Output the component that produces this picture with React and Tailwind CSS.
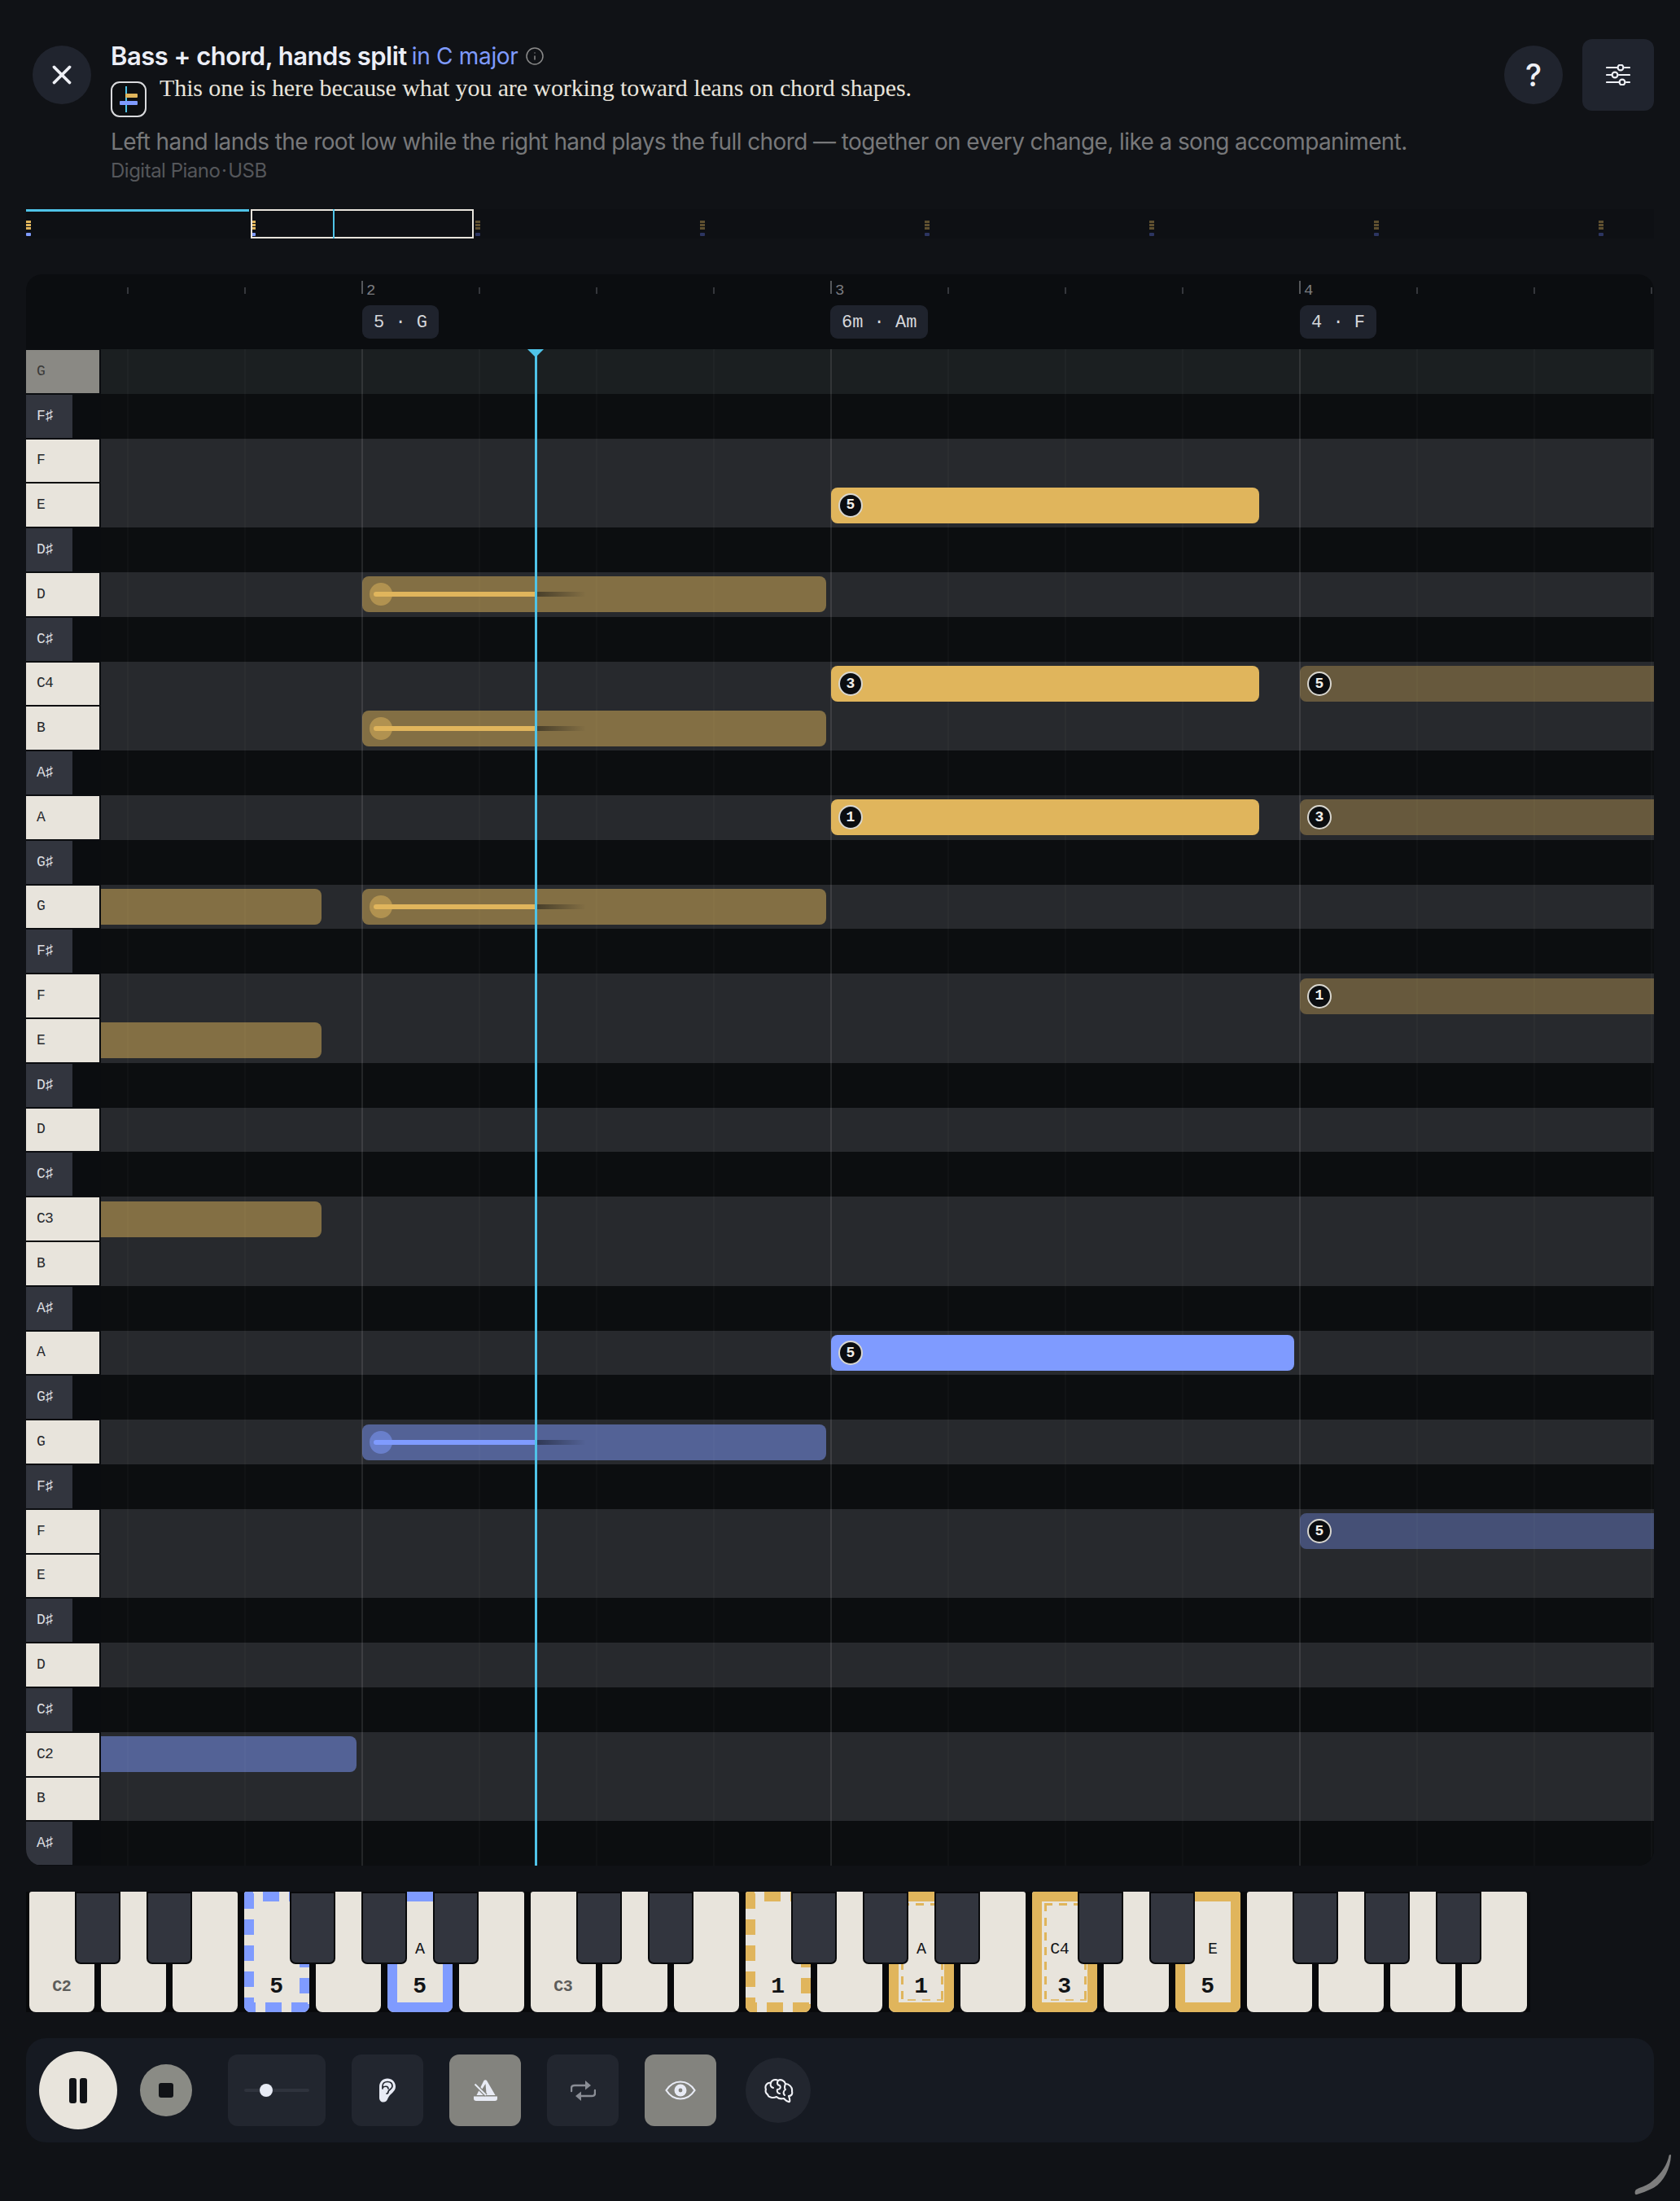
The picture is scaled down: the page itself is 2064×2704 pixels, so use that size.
import React from "react";
import { X, Info } from "lucide-react";

const ROW_H = 54.8;
const MONO = "font-['Liberation_Mono',monospace]";

const ROWS = [
  ["G", 0], ["F♯", 1], ["F", 0], ["E", 0], ["D♯", 1], ["D", 0], ["C♯", 1], ["C4", 0], ["B", 0], ["A♯", 1],
  ["A", 0], ["G♯", 1], ["G", 0], ["F♯", 1], ["F", 0], ["E", 0], ["D♯", 1], ["D", 0], ["C♯", 1], ["C3", 0],
  ["B", 0], ["A♯", 1], ["A", 0], ["G♯", 1], ["G", 0], ["F♯", 1], ["F", 0], ["E", 0], ["D♯", 1], ["D", 0],
  ["C♯", 1], ["C2", 0], ["B", 0], ["A♯", 1],
];

const YELLOW = "bg-[#e0b55c]";
const YELLOW_DIM = "bg-[#e0b55c]/50";
const YELLOW_LATER = "bg-[#e0b55c]/35";
const BLUE = "bg-[#7f9bff]";
const BLUE_DIM = "bg-[#7f9bff]/50";
const BLUE_LATER = "bg-[#7f9bff]/35";

// row, x from, x to (page pixels), colour, finger, progress colour
const NOTES = [
  { row: 3, from: 1021, to: 1547, color: YELLOW, finger: 5 },
  { row: 5, from: 445, to: 1015, color: YELLOW_DIM, hand: "y" },
  { row: 7, from: 1021, to: 1547, color: YELLOW, finger: 3 },
  { row: 7, from: 1597, to: 2040, color: YELLOW_LATER, finger: 5 },
  { row: 8, from: 445, to: 1015, color: YELLOW_DIM, hand: "y" },
  { row: 10, from: 1021, to: 1547, color: YELLOW, finger: 1 },
  { row: 10, from: 1597, to: 2040, color: YELLOW_LATER, finger: 3 },
  { row: 12, from: 124, to: 395, color: YELLOW_DIM, square: true },
  { row: 12, from: 445, to: 1015, color: YELLOW_DIM, hand: "y" },
  { row: 14, from: 1597, to: 2040, color: YELLOW_LATER, finger: 1 },
  { row: 15, from: 124, to: 395, color: YELLOW_DIM, square: true },
  { row: 19, from: 124, to: 395, color: YELLOW_DIM, square: true },
  { row: 22, from: 1021, to: 1590, color: BLUE, finger: 5 },
  { row: 24, from: 445, to: 1015, color: BLUE_DIM, hand: "b" },
  { row: 26, from: 1597, to: 2040, color: BLUE_LATER, finger: 5 },
  { row: 31, from: 124, to: 438, color: BLUE_DIM, square: true },
];

const BEATS = [156, 300, 444, 588, 732, 876, 1020, 1164, 1308, 1452, 1596, 1740, 1884, 2028];
const BARS = { 444: "2", 1020: "3", 1596: "4" };
const CHIPS = [
  [445, "5 · G"],
  [1020, "6m · Am"],
  [1597, "4 · F"],
];

const BLACK_AT = [1, 2, 4, 5, 6, 8, 9, 11, 12, 13, 15, 16, 18, 19, 20];

const KEY_MARKS = {
  3: { dashed: "blue", finger: 5 },
  5: { solid: "border-[#7f9bff]", finger: 5, name: "A" },
  10: { dashed: "yellow", finger: 1 },
  12: { solid: "border-[#e0b55c]", finger: 1, name: "A", inner: true },
  14: { solid: "border-[#e0b55c]", finger: 3, name: "C4", inner: true, nameShift: "-translate-x-[6px]" },
  16: { solid: "border-[#e0b55c]", finger: 5, name: "E", nameShift: "translate-x-[6px]" },
};

function Header() {
  return (
    <header className="h-[257px] flex items-start pt-[48px]">
      <button className="ml-2 mt-2 w-[72px] h-[72px] rounded-full bg-[#20242e] flex items-center justify-center text-[#eef0f6] shrink-0">
        <X size={38} strokeWidth={2.4} />
      </button>
      <div className="ml-[24px] mt-[2px] flex-1 font-['Inter',sans-serif]">
        <div className="h-[38px] flex items-center">
          <span className="text-[31px] font-semibold text-[#eceef6] tracking-[-0.5px]">Bass + chord, hands split</span>
          <span className="ml-[6px] text-[28px] text-[#7f9bff] tracking-[-0.3px]">in C major</span>
          <Info size={24} strokeWidth={1.5} className="ml-[8px] text-[#8a8a8a]" />
        </div>
        <div className="mt-3 h-[44px] flex items-start">
          <div className="relative w-[44px] h-[44px] rounded-[11px] border-2 border-[#d9dadd] bg-[#0d0f12] shrink-0">
            <div className="absolute left-[16px] top-[4px] w-[1.5px] h-[32px] bg-[#4fc3e8]" />
            <div className="absolute left-[16px] top-[13px] w-[15px] h-[5px] rounded-[1px] bg-[#e0b55c]" />
            <div className="absolute left-[9px] top-[22px] w-[22px] h-[5px] rounded-[1px] bg-[#7f9bff]" />
          </div>
          <p className="ml-[16px] font-['Liberation_Serif',serif] text-[30px] leading-4 text-[#e8e4dc] tracking-[-0.1px]">
            This one is here because what you are working toward leans on chord shapes.
          </p>
        </div>
        <p className="mt-3 text-[28px] leading-9 text-[#77787a] tracking-[-0.6px]">
          Left hand lands the root low while the right hand plays the full chord — together on every change, like a song accompaniment.
        </p>
        <p className="text-[24px] leading-9 text-[#55575b] tracking-[-0.5px]">Digital Piano{"\u200a·\u200a"}USB</p>
      </div>
      <button className="mt-2 w-[72px] h-[72px] rounded-full bg-[#20242e] flex items-center justify-center text-[#eef0f6] text-[38px] font-medium font-['Inter',sans-serif] shrink-0">
        ?
      </button>
      <button className="ml-6 w-[88px] h-[88px] rounded-[12px] bg-[#20242e] flex items-center justify-center shrink-0">
        <svg width="30" height="26" viewBox="0 0 30 26" fill="none" stroke="#eef0f6" strokeWidth="2.2" strokeLinecap="round">
          <path d="M1 4h13M23 4h6M1 13h6M16 13h13M1 22h15M25 22h4" />
          <circle cx="18" cy="4" r="3.4" />
          <circle cx="11" cy="13" r="3.4" />
          <circle cx="20" cy="22" r="3.4" />
        </svg>
      </button>
    </header>
  );
}

function MiniMap() {
  return (
    <div className="relative h-[36px] bg-[#0e1014]">
      {[0, 1, 2, 3, 4, 5, 6, 7].map((i) => (
        <div key={i} className="absolute top-[14px] w-[6px] flex flex-col gap-[1px]" style={{ left: 276 * i }}>
          <div className={"h-[3px] " + (i < 2 ? "bg-[#e0b55c]" : "bg-[#5f5030]")} />
          <div className={"h-[3px] " + (i < 2 ? "bg-[#e0b55c]" : "bg-[#5f5030]")} />
          <div className={"h-[3px] " + (i < 2 ? "bg-[#e0b55c]" : "bg-[#5f5030]")} />
          <div className={"mt-[3px] h-[4px] rounded-[1px] " + (i < 2 ? "bg-[#7f9bff]" : "bg-[#2c3561]")} />
        </div>
      ))}
      <div className="absolute left-0 top-0 w-[274px] h-[3px] bg-[#4fc3e8]" />
      <div className="absolute left-[276px] top-0 w-[274px] h-[36px] border-2 border-[#e8e4dc]" />
      <div className="absolute left-[377px] top-0 w-[2px] h-[36px] bg-[#4fc3e8]" />
    </div>
  );
}

function Ruler() {
  return (
    <div className="relative h-[92px]">
      {BEATS.map((x) => (
        <div
          key={x}
          className={BARS[x] ? "absolute top-[8px] w-[2px] h-[16px] bg-[#55575b]" : "absolute top-[16px] w-[2px] h-[8px] bg-[#35373c]"}
          style={{ left: x - 32 }}
        />
      ))}
      {BEATS.filter((x) => BARS[x]).map((x) => (
        <span key={x} className={"absolute top-[9px] text-[19px] leading-[22px] text-[#7b7c80] " + MONO} style={{ left: x - 26 }}>
          {BARS[x]}
        </span>
      ))}
      {CHIPS.map(([x, label]) => (
        <div
          key={x}
          className={"absolute top-[38px] h-[41px] pt-[1px] px-[14px] rounded-[9px] bg-[#1f232d] flex items-center text-[22px] text-[#d5d6da] whitespace-pre " + MONO}
          style={{ left: x - 32 }}
        >
          {label}
        </div>
      ))}
    </div>
  );
}

function Note({ note }) {
  return (
    <div
      className={"absolute h-[44px] " + note.color + (note.square ? " rounded-r-lg" : " rounded-lg")}
      style={{ left: note.from - 32, width: note.to - note.from, top: note.row * ROW_H + 5.4 }}
    >
      {note.finger && (
        <div className={"absolute left-[9px] top-[7px] w-[30px] h-[30px] rounded-full bg-[#0b0d10] border-2 border-[#d8d6cf] flex items-center justify-center text-[18px] font-bold text-[#f1efe9] " + MONO}>
          {note.finger}
        </div>
      )}
      {note.hand && (
        <>
          <div className={"absolute left-[9px] top-[8px] w-[28px] h-[28px] rounded-full " + (note.hand === "y" ? "bg-[#e0b55c]/50" : "bg-[#7f9bff]/50")} />
          <div className={"absolute left-[14px] top-[19px] w-[199px] h-[6px] rounded-l-full " + (note.hand === "y" ? "bg-[#e0b55c]" : "bg-[#7f9bff]")} />
          <div className="absolute left-[213px] top-[19px] w-[62px] h-[6px] bg-gradient-to-r from-[#0b0d10]/50 to-transparent" />
        </>
      )}
    </div>
  );
}

function Roll() {
  return (
    <div className="relative">
      {ROWS.map(([name, black], i) => (
        <div key={i} className="flex h-[54.8px]">
          <div className="w-[92px] shrink-0 py-[1px]">
            <div
              className={
                "h-full pl-[13px] flex items-center text-[18px] tracking-[-0.8px] " + MONO + " " +
                (black
                  ? "w-[57px] bg-[#32353e] text-[#dcdde0]"
                  : i === 0
                    ? "w-[90px] bg-[#8a8984] text-[#3a3a38]"
                    : "w-[90px] bg-[#e8e4dc] text-[#26282c]")
              }
            >
              {name}
            </div>
          </div>
          <div className={"flex-1 " + (i === 0 ? "bg-[#1b1f21]" : black ? "bg-[#0c0e10]" : "bg-[#27292d]")} />
        </div>
      ))}
      {BEATS.map((x) => (
        <div
          key={x}
          className={"absolute top-0 bottom-0 " + (BARS[x] ? "w-[2px] bg-white/[0.1]" : "w-[1.5px] bg-white/[0.025]")}
          style={{ left: x - 32 }}
        />
      ))}
      {NOTES.map((n, i) => (
        <Note key={i} note={n} />
      ))}
      <div className="absolute left-[625px] top-0 bottom-0 w-[3px] bg-[#4fc3e8]" />
      <div className="absolute left-[616px] top-0 w-0 h-0 border-l-[10px] border-r-[10px] border-t-[10px] border-l-transparent border-r-transparent border-t-[#4fc3e8]" />
    </div>
  );
}

// dashes drawn edge by edge: 20px on, 12px off, with the phase each edge has in the picture
function DashedBlue() {
  return (
    <>
      <div className="absolute left-0 right-0 top-0 h-[12px] bg-[repeating-linear-gradient(90deg,#7f9bff_0_11px,transparent_11px_23px,#7f9bff_23px_32px)]" />
      <div className="absolute left-0 right-0 bottom-0 h-[12px] bg-[repeating-linear-gradient(90deg,#7f9bff_0_14px,transparent_14px_26.5px,#7f9bff_26.5px_32px)]" />
      <div className="absolute left-0 top-0 bottom-0 w-[12px] bg-[repeating-linear-gradient(180deg,transparent_0_2px,#7f9bff_2px_21px,transparent_21px_32px)]" />
      <div className="absolute right-0 top-0 bottom-0 w-[12px] bg-[repeating-linear-gradient(180deg,transparent_0_10px,#7f9bff_10px_29px,transparent_29px_32px)]" />
    </>
  );
}

function DashedYellow() {
  return (
    <>
      <div className="absolute left-0 right-0 top-0 h-[12px] bg-[repeating-linear-gradient(90deg,#e0b55c_0_11px,transparent_11px_23px,#e0b55c_23px_32px)]" />
      <div className="absolute left-0 right-0 bottom-0 h-[12px] bg-[repeating-linear-gradient(90deg,#e0b55c_0_14px,transparent_14px_26.5px,#e0b55c_26.5px_32px)]" />
      <div className="absolute left-0 top-0 bottom-0 w-[12px] bg-[repeating-linear-gradient(180deg,transparent_0_2px,#e0b55c_2px_21px,transparent_21px_32px)]" />
      <div className="absolute right-0 top-0 bottom-0 w-[12px] bg-[repeating-linear-gradient(180deg,transparent_0_10px,#e0b55c_10px_29px,transparent_29px_32px)]" />
    </>
  );
}

function InnerDashes() {
  return (
    <>
      <div className="absolute left-[15px] right-[13px] top-[14px] h-[3px] bg-[repeating-linear-gradient(90deg,#e0b55c_0_10px,transparent_10px_18px)]" />
      <div className="absolute left-[15px] right-[13px] bottom-[14px] h-[2px] bg-[repeating-linear-gradient(90deg,transparent_0_8px,#e0b55c_8px_18px)] opacity-80" />
      <div className="absolute left-[15px] top-[14px] bottom-[14px] w-[3px] bg-[repeating-linear-gradient(180deg,#e0b55c_0_10px,transparent_10px_18px)]" />
      <div className="absolute right-[13px] top-[14px] bottom-[14px] w-[3px] bg-[repeating-linear-gradient(180deg,#e0b55c_0_10px,transparent_10px_18px)]" />
    </>
  );
}

function Keyboard() {
  const keys = Array.from({ length: 21 }, (_, i) => i);
  return (
    <div className="relative mt-8 w-[1848px] h-[148px] pl-1 flex gap-[8.5px] bg-[#08090b]">
      {keys.map((i) => {
        const mark = KEY_MARKS[i];
        return (
          <div key={i} className="relative w-[79.5px] shrink-0 bg-[#e8e4dc] rounded-t-[3px] rounded-b-lg overflow-hidden">
            {mark && mark.solid && <div className={"absolute inset-0 border-[12px] " + mark.solid} />}
            {mark && mark.dashed === "blue" && <DashedBlue />}
            {mark && mark.dashed === "yellow" && <DashedYellow />}
            {mark && mark.inner && <InnerDashes />}
            {mark && (
              <span className={"absolute left-0 right-0 top-[117px] -translate-y-1/2 text-center text-[28px] font-bold text-[#111316] " + MONO}>
                {mark.finger}
              </span>
            )}
            {mark && mark.name && (
              <span className={"absolute left-0 right-0 top-[71px] -translate-y-1/2 text-center text-[20px] tracking-[-0.6px] text-[#111316] " + MONO + " " + (mark.nameShift || "")}>
                {mark.name}
              </span>
            )}
            {(i === 0 || i === 7) && (
              <span className={"absolute left-0 right-0 top-[117px] -translate-y-1/2 text-center text-[20px] tracking-[-0.6px] font-bold text-[#5c5c5a] " + MONO}>
                {i === 0 ? "C2" : "C3"}
              </span>
            )}
          </div>
        );
      })}
      {BLACK_AT.map((k) => (
        <div
          key={k}
          className="absolute top-0 w-[56px] h-[89px] bg-[#32353e] border-2 border-[#08090b] rounded-b-[7px]"
          style={{ left: 4 + 88 * k - 4.25 - 28 }}
        />
      ))}
    </div>
  );
}

function EarIcon() {
  return (
    <svg width="22" height="30" viewBox="0 0 22 30">
      <path d="M1 10.5C1 4.5 5.5 0.5 11 0.5S21 4.5 21 10.5C21 17 14 19 11.5 25C10.5 28 8.5 29.5 6 29.5C3 29.5 1 27.5 1 24Z" fill="#e8ebf5" />
      <path d="M5 13V10C5 6.5 7.5 4.5 11 4.5S17 6.5 17 10C17 13.5 13 13.5 12 16.5C12 18 11 19 10 19M5 12C7 9.5 12 9.5 12 13" fill="none" stroke="#22262f" strokeWidth="1.7" strokeLinecap="round" />
    </svg>
  );
}

function MetronomeIcon() {
  return (
    <svg width="29" height="26" viewBox="0 0 29 26">
      <path d="M12.5 1C13.3 0 15.3 0 16 1L26.5 19H3.5Z" fill="#e8ebf5" />
      <path d="M14.5 5L15.5 17L10 12Z" fill="#83837e" />
      <path d="M0 20.5H29V23A3 3 0 0 1 26 26H3A3 3 0 0 1 0 23Z" fill="#e8ebf5" />
      <path d="M1.5 5.5L15 19" stroke="#83837e" strokeWidth="4.5" />
      <path d="M1.5 5.5L15 19" stroke="#e8ebf5" strokeWidth="2" />
    </svg>
  );
}

function RepeatIcon() {
  return (
    <svg width="31" height="25" viewBox="0 0 31 25" fill="none">
      <path d="M1 13V9.5C1 7 2.5 6 5 6H19M30 12V15.5C30 18 28.5 19 26 19H12" stroke="#8a8d95" strokeWidth="2.4" strokeLinecap="round" />
      <path d="M18 0L25 6L18 11.5ZM13 13.5L6 19L13 25Z" fill="#8a8d95" />
    </svg>
  );
}

function EyeIcon() {
  return (
    <svg width="38" height="24" viewBox="0 0 38 24">
      <path d="M1.5 12C6 5 12 1.5 19 1.5S32 5 36.5 12C32 19 26 22.5 19 22.5S6 19 1.5 12Z" fill="none" stroke="#e8ebf5" strokeWidth="2.2" />
      <circle cx="19" cy="12" r="7.5" fill="#e8ebf5" />
      <circle cx="19" cy="12" r="2.4" fill="#83837e" />
    </svg>
  );
}

function BrainIcon() {
  return (
    <svg width="37" height="31" viewBox="0 0 37 31" fill="none" stroke="#f1f2f7" strokeWidth="2.1" strokeLinecap="round" strokeLinejoin="round">
      <path d="M3 14C1 9 5 5 9 6C10 2 15 1 18 3C21 1 26 3 27 7C31 7 36 11 35 16C36 20 34 22 31 22C32 25 33 27 32 29C29 30 27 27 25 25C21 26 18 25 16 23C12 25 6 24 5 20C3 19 2 16 3 14Z" />
      <path d="M9 6C8 9 9 11 12 12M18 3C16 6 17 9 20 9C22 12 20 14 17 14C16 17 18 19 20 19M27 7C26 10 25 12 27 14C24 16 24 19 26 21" />
    </svg>
  );
}

function Controls() {
  return (
    <div className="mt-8 h-[128px] rounded-[24px] bg-[#161a22] flex items-center pl-4">
      <button className="w-24 h-24 rounded-full bg-[#e8e4dc] flex items-center justify-center gap-[4px] shrink-0">
        <span className="w-[9px] h-[31px] rounded-[3px] bg-[#101216]" />
        <span className="w-[9px] h-[31px] rounded-[3px] bg-[#101216]" />
      </button>
      <button className="ml-7 w-16 h-16 rounded-full bg-[#8a8b85] flex items-center justify-center shrink-0">
        <span className="w-[18px] h-[18px] rounded-[3px] bg-[#101216]" />
      </button>
      <div className="relative ml-11 w-[120px] h-[88px] rounded-[12px] bg-[#22262f] shrink-0">
        <div className="absolute left-5 right-5 top-[42px] h-1 rounded-full bg-[#2f333d]" />
        <div className="absolute left-[39px] top-9 w-4 h-4 rounded-full bg-[#e8ebf5]" />
      </div>
      <button className="ml-8 w-[88px] h-[88px] rounded-[12px] bg-[#22262f] flex items-center justify-center shrink-0">
        <EarIcon />
      </button>
      <button className="ml-8 w-[88px] h-[88px] rounded-[12px] bg-[#83837e] flex items-center justify-center shrink-0">
        <MetronomeIcon />
      </button>
      <button className="ml-8 w-[88px] h-[88px] rounded-[12px] bg-[#22262f] flex items-center justify-center shrink-0">
        <RepeatIcon />
      </button>
      <button className="ml-8 w-[88px] h-[88px] rounded-[12px] bg-[#83837e] flex items-center justify-center shrink-0">
        <EyeIcon />
      </button>
      <button className="ml-9 w-20 h-20 rounded-full bg-[#22262f] flex items-center justify-center shrink-0">
        <BrainIcon />
      </button>
    </div>
  );
}

export default function App() {
  return (
    <div className="relative w-full h-[2704px] overflow-hidden bg-[#101216] px-8">
      <Header />
      <MiniMap />
      <section className="mt-11 rounded-[20px] overflow-hidden bg-[#0b0d10]">
        <Ruler />
        <Roll />
      </section>
      <Keyboard />
      <Controls />
      {/* window resize corner */}
      <svg className="absolute right-[7px] bottom-[7px]" width="52" height="52" viewBox="0 0 52 52" fill="#7d7d7d">
        <path d="M48 3C47 20 38 38 24 44C18 47 12 49 6 51C3 52 3 47 5 45C10 42 16 41 22 37C34 28 43 16 45.5 3C46 1.5 48 1.5 48 3Z" />
      </svg>
    </div>
  );
}
